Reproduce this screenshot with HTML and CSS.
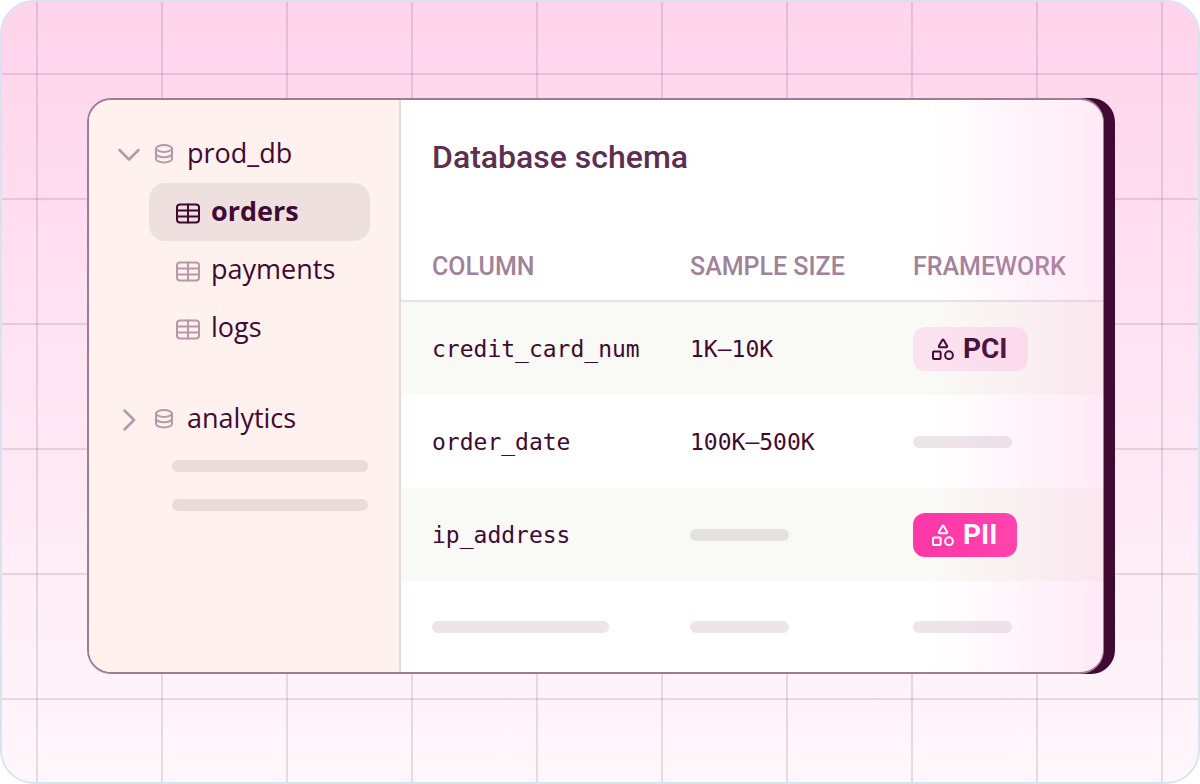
FILE: index.html
```
<!DOCTYPE html>
<html lang="en">

<head>
    <meta charset="UTF-8">
    <meta name="viewport" content="width=device-width, initial-scale=1.0">
    <title>Database schema</title>
    <link rel="stylesheet" href="styles.css">
</head>

<body>

    <!-- shared icons -->
    <svg class="sprite" aria-hidden="true">
        <symbol id="icon-db" viewBox="0 0 24 24">
            <ellipse cx="12" cy="6.500" rx="8" ry="3.400" />
            <path d="M4 6.500v10.500c0 1.900 3.600 3.400 8 3.400s8-1.500 8-3.400V6.500" />
            <path d="M4 11.800c0 1.900 3.600 3.400 8 3.400s8-1.500 8-3.400" />
        </symbol>
        <symbol id="icon-table" viewBox="0 0 24 24">
            <rect x="1" y="4.500" width="22" height="18" rx="3" />
            <path d="M1 10.500h22M1 16.500h22M12 4.500v18" />
        </symbol>
        <symbol id="icon-shapes" viewBox="0 0 24 24">
            <path d="M11.200 3.200 8 8.800q-.6 1.400.9 1.400h6.200q1.500 0 .9-1.400l-3.200-5.600q-.8-1.200-1.600 0z" />
            <rect x="2" y="14.400" width="7.600" height="7.600" rx="1" />
            <circle cx="18" cy="18.200" r="3.900" />
        </symbol>
    </svg>

    <div class="frame">
        <div class="card">
            <nav class="sidebar">
                <button class="tree-item" type="button">
                    <svg class="chevron" viewBox="0 0 24 24"><path d="M2.500 8 12 17.500 21.500 8" /></svg>
                    <svg class="icon"><use href="#icon-db" /></svg>
                    prod_db
                </button>
                <div class="tree-children">
                    <button class="tree-item active" type="button">
                        <svg class="icon"><use href="#icon-table" /></svg>
                        orders
                    </button>
                    <button class="tree-item" type="button">
                        <svg class="icon"><use href="#icon-table" /></svg>
                        payments
                    </button>
                    <button class="tree-item" type="button">
                        <svg class="icon"><use href="#icon-table" /></svg>
                        logs
                    </button>
                </div>
                <button class="tree-item" type="button">
                    <svg class="chevron" viewBox="0 0 24 24"><path d="M7.500 3.500 17 13 7.500 22.500" /></svg>
                    <svg class="icon"><use href="#icon-db" /></svg>
                    analytics
                </button>
                <div class="tree-loading">
                    <div class="bar"></div>
                    <div class="bar"></div>
                </div>
            </nav>

            <main class="content">
                <h1>Database schema</h1>
                <table>
                    <thead>
                        <tr>
                            <th class="col-name">COLUMN</th>
                            <th class="col-size">SAMPLE SIZE</th>
                            <th>FRAMEWORK</th>
                        </tr>
                    </thead>
                    <tbody>
                        <tr>
                            <td>credit_card_num</td>
                            <td>1K–10K</td>
                            <td>
                                <span class="badge">
                                    <svg class="icon"><use href="#icon-shapes" /></svg>
                                    PCI
                                </span>
                            </td>
                        </tr>
                        <tr>
                            <td>order_date</td>
                            <td>100K–500K</td>
                            <td><div class="bar"></div></td>
                        </tr>
                        <tr>
                            <td>ip_address</td>
                            <td><div class="bar"></div></td>
                            <td>
                                <span class="badge badge-pii">
                                    <svg class="icon"><use href="#icon-shapes" /></svg>
                                    PII
                                </span>
                            </td>
                        </tr>
                        <tr>
                            <td><div class="bar bar-wide"></div></td>
                            <td><div class="bar"></div></td>
                            <td><div class="bar"></div></td>
                        </tr>
                    </tbody>
                </table>
            </main>
        </div>
    </div>

</body>

</html>
```

FILE: styles.css
```
* {
    box-sizing: border-box;
}

body {
    margin: 0;
    background-color: #fff;
    color: #400a33;
    font-family: "Open Sans", sans-serif;
}

.sprite {
    display: none;
}

.frame {
    min-height: 100vh;
    padding: 96px 94px 96px 85px;
    border: 2px solid #d9e2ef;
    border-radius: 34px;
    background-image:
        linear-gradient(to right, rgba(64, 10, 51, 0.12) 2px, transparent 2px),
        linear-gradient(to bottom, rgba(64, 10, 51, 0.12) 2px, transparent 2px),
        linear-gradient(to bottom, #ffd4ec, #fff7fb);
    background-size: 125px 125px, 125px 125px, auto;
    background-position: 34px 0, 0 71px, 0 0;
    background-repeat: repeat, repeat, no-repeat;
}

.card {
    display: flex;
    overflow: hidden;
    border: 2px solid #a07c93;
    border-right-width: 1px;
    border-radius: 24px;
    background-color: #fff;
    box-shadow: 11px 0 0 #400a33;
}

/* sidebar */
.sidebar {
    flex: 0 0 312px;
    padding: 25px 29px 25px 28px;
    border-right: 2px solid #e6d8d8;
    background-color: #fff1ed;
}

.tree-item {
    display: flex;
    align-items: center;
    gap: 11px;
    width: 100%;
    height: 58px;
    padding: 0 0 4px;
    border: none;
    border-radius: 16px;
    background: none;
    color: inherit;
    font-family: inherit;
    font-size: 27px;
    cursor: pointer;
}

.tree-children {
    margin: 0 0 33px 32px;
}

.tree-children .tree-item {
    padding-left: 27px;
}

.tree-item.active {
    background-color: #efe0e0;
    font-weight: bold;
}

.icon,
.chevron {
    flex: none;
    width: 24px;
    height: 24px;
    fill: none;
    stroke: #b797a8;
    stroke-width: 2;
    stroke-linecap: round;
    stroke-linejoin: round;
}

.chevron {
    stroke-width: 2.5;
}

.tree-item svg {
    margin-top: 4px;
}

.active .icon {
    stroke: #400a33;
}

.tree-loading {
    display: flex;
    flex-direction: column;
    gap: 27px;
    margin: 12px 2px 0 55px;
}

.bar {
    width: 99px;
    height: 12px;
    border-radius: 6px;
    background-color: rgba(64, 10, 51, 0.1);
}

.bar-wide {
    width: 177px;
}

.tree-loading .bar {
    width: 100%;
    background-color: #ecdada;
}

/* schema table */
.content {
    position: relative;
    flex: 1;
}

/* fades the last column out to pink */
.content::after {
    content: "";
    position: absolute;
    inset: 0 0 0 auto;
    width: 172px;
    background-image: linear-gradient(to right, rgba(254, 160, 215, 0), rgba(254, 160, 215, 0.22));
    pointer-events: none;
}

h1 {
    margin: 0;
    padding: 36px 31px;
    color: #5c2e50;
    font-family: Roboto, sans-serif;
    font-size: 32px;
    font-weight: 500;
    line-height: 42px;
}

table {
    width: 100%;
    border-spacing: 0;
    table-layout: fixed;
}

.col-name {
    width: 258px;
}

.col-size {
    width: 223px;
}

th {
    height: 88px;
    padding: 19px 0 0 31px;
    border-bottom: 2px solid #e6e2e6;
    color: #a0829a;
    font-family: Roboto, sans-serif;
    font-size: 25px;
    font-weight: 500;
    text-align: left;
    white-space: nowrap;
}

td {
    height: 93px;
    padding: 0 0 0 31px;
    font-family: "DejaVu Sans Mono", monospace;
    font-size: 23px;
}

tbody tr:nth-child(odd) {
    background-color: #f9faf5;
}

tbody tr:last-child td {
    height: 91px;
}

.badge {
    display: inline-flex;
    align-items: center;
    gap: 8px;
    height: 44px;
    padding: 0 20px 0 18px;
    border-radius: 12px;
    background-color: #fbe2ef;
    color: #400a33;
    font-family: Roboto, sans-serif;
    font-size: 28px;
    font-weight: bold;
    vertical-align: middle;
}

.badge .icon {
    stroke: currentColor;
}

.badge-pii {
    background-color: #ff38a8;
    color: #fff;
}
```
